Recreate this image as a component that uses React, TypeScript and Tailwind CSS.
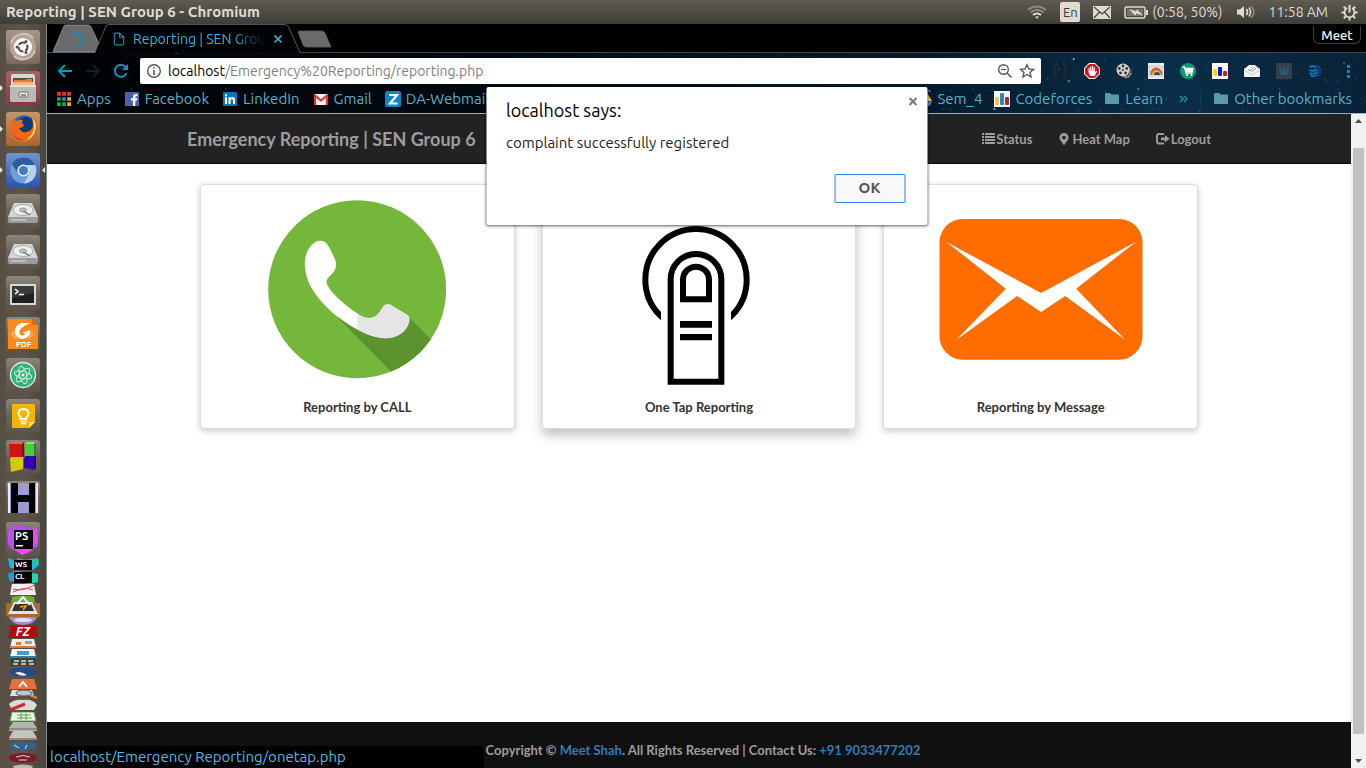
import React from "react";
import { FaMapMarkerAlt } from "react-icons/fa";
import { FiFile } from "react-icons/fi";

type Kids = { children?: React.ReactNode };

/* ---------- System panel ---------- */

function SystemPanel() {
  return (
    <header className="flex h-6 shrink-0 items-center justify-between bg-linear-to-b from-[#5f5b50] to-[#3e3d39] pr-2 pl-[6px] text-[14px] text-[#dfdbd2]">
      <h1 className="text-[15px] leading-6 font-bold">Reporting | SEN Group 6 - Chromium</h1>
      <div className="flex items-center gap-[13px] leading-6">
        <svg width="20" height="16" viewBox="0 0 20 16" fill="none" strokeWidth="2" aria-label="Wi-Fi">
          <path d="M1 6Q10 -1 19 6" stroke="#8d8a82" />
          <path d="M3.5 8.500Q10 3.500 16.500 8.500" stroke="#8d8a82" />
          <path d="M6 11Q10 8 14 11" stroke="#dfdbd2" />
          <path d="M8 12.500H12L10 15Z" fill="#dfdbd2" stroke="none" />
        </svg>
        <span className="flex h-5 w-5 items-center justify-center rounded-xs bg-[#dfdbd2] text-[13px] text-[#3c3b37]">En</span>
        <svg width="18" height="13" viewBox="0 0 18 13" aria-label="Messages">
          <rect width="18" height="13" fill="#dfdbd2" />
          <path d="M1 1L9 8L17 1M1 12L6.500 6M17 12L11.500 6" stroke="#4c4a44" strokeWidth="1.300" fill="none" />
        </svg>
        <span className="flex items-center gap-1">
          <svg width="24" height="13" viewBox="0 0 24 13" aria-label="Battery">
            <rect x="1" y="1" width="20" height="11" rx="1.500" fill="none" stroke="#dfdbd2" strokeWidth="1.500" />
            <rect x="22" y="4" width="2" height="5" fill="#dfdbd2" />
            <rect x="3" y="3" width="16" height="7" fill="#77746c" />
            <path d="M5 3L12 5.500L13 3.500L19 9.500L12.500 7.500L11 9.500Z" fill="#dfdbd2" />
          </svg>
          <span>(0:58, 50%)</span>
        </span>
        <svg width="20" height="16" viewBox="0 0 20 16" fill="none" strokeWidth="1.600" aria-label="Volume">
          <path d="M1 5.500H4L8 2V14L4 10.500H1Z" fill="#dfdbd2" />
          <path d="M10.500 5Q12.500 8 10.500 11M13 3.500Q16 8 13 12.500" stroke="#dfdbd2" />
          <path d="M15.500 2Q20 8 15.500 14" stroke="#8d8a82" />
        </svg>
        <span>11:58 AM</span>
        <svg width="17" height="17" viewBox="0 0 17 17" fill="none" stroke="#dfdbd2" aria-label="Session">
          <path d="M6 4A5 5 0 1 0 11 4" strokeWidth="1.800" />
          <path d="M8.500 1V8.500" strokeWidth="2" />
          <path d="M.5 8.500H3.500M13.500 8.500H16.500M2.800 2.800L4.800 4.800M14.200 2.800L12.200 4.800M2.800 14.200L4.800 12.200M14.200 14.200L12.200 12.200M8.500 13.500V16.500" strokeWidth="2" />
        </svg>
      </div>
    </header>
  );
}

/* ---------- Launcher ---------- */

function Svg34({ children }: Kids) {
  return (
    <svg width="34" height="34" viewBox="0 0 34 34">
      {children}
    </svg>
  );
}

function DriveIcon() {
  return (
    <Svg34>
      <path d="M8 9H26L32 23H2Z" fill="#d5d5d5" />
      <path d="M2 23H32V27Q32 29 30 29H4Q2 29 2 27Z" fill="#9b9b9b" />
      <ellipse cx="17" cy="16" rx="10" ry="5.500" fill="#eeeeee" stroke="#a9a9a9" />
      <ellipse cx="17" cy="16" rx="3.500" ry="2" fill="#c2c2c2" stroke="#999" />
      <path d="M24 21L17 17" stroke="#888" strokeWidth="1.500" />
      <path d="M5 26H20" stroke="#ddd" />
    </Svg34>
  );
}

type App = { name: string; tile: string; icon: React.ReactNode; running?: boolean; active?: boolean };

const plain = "bg-linear-to-b from-[#8b857b] via-[#696259] to-[#5b544b]";

const apps: App[] = [
  {
    name: "Search",
    tile: "bg-linear-to-b from-[#a8968a] to-[#7d685b]",
    icon: (
      <Svg34>
        <circle cx="17" cy="17" r="13" fill="#b3a498" />
        <path d="M5 13A13 13 0 0 1 27 8M29 21A13 13 0 0 1 8 26" stroke="#d0c5bc" strokeWidth="2" fill="none" />
        <circle cx="17" cy="17" r="9" fill="#fff" />
        <circle cx="17" cy="17" r="4.500" fill="none" stroke="#5e4c40" strokeWidth="2.200" strokeDasharray="7.600 1.800" strokeDashoffset="3" />
        <circle cx="11" cy="17" r="1.500" fill="#5e4c40" />
        <circle cx="20" cy="11.500" r="1.500" fill="#5e4c40" />
        <circle cx="20" cy="22.500" r="1.500" fill="#5e4c40" />
      </Svg34>
    ),
  },
  {
    name: "Files",
    tile: "bg-linear-to-b from-[#a8616b] to-[#87364a]",
    running: true,
    icon: (
      <Svg34>
        <rect x="5" y="3" width="24" height="15" rx="2" fill="#d7d7d2" />
        <rect x="7" y="7" width="20" height="8" fill="#594c41" />
        <path d="M8 9H19L20 8H26V15H8Z" fill="#ef7d31" />
        <rect x="7" y="11" width="20" height="4" fill="#f7b57f" />
        <rect x="4" y="14" width="26" height="17" rx="1.500" fill="#b9b9b5" />
        <path d="M4 15H30" stroke="#efefec" strokeWidth="1.500" />
        <rect x="13" y="21" width="9" height="5" rx="1" fill="#e9e9e5" stroke="#71716d" />
        <path d="M15 24H20" stroke="#71716d" strokeWidth="1.500" />
      </Svg34>
    ),
  },
  {
    name: "Firefox",
    tile: "bg-linear-to-b from-[#c4956b] to-[#a9652d]",
    running: true,
    icon: (
      <Svg34>
        <circle cx="18" cy="16" r="12.500" fill="#1f62b0" />
        <circle cx="20" cy="13" r="8" fill="#0c3a7c" />
        <path d="M25 4Q33 11 30 20Q27 30 16 30Q5 29 4 18Q3 10 8 6Q8 9 11 9Q14 7 17 8Q15 11 18 13Q17 16 13 16Q15 21 21 20Q27 18 27 12Q27 8 25 4Z" fill="#ea6b1d" />
        <path d="M26 6Q32 12 29 19Q27 26 20 28Q28 22 28 15Q28 10 26 6Z" fill="#ffe155" />
        <path d="M6 19Q9 27 18 28Q9 30 6 19Z" fill="#c6301c" />
      </Svg34>
    ),
  },
  {
    name: "Chromium",
    tile: "bg-linear-to-b from-[#7392cc] to-[#2f55ad]",
    running: true,
    active: true,
    icon: (
      <Svg34>
        <circle cx="17.500" cy="17.500" r="13" fill="#6f9fda" />
        <path d="M6 11A13 13 0 0 1 29 12H17Q11 12 11 19Z" fill="#2f5c9c" />
        <path d="M29 12A13 13 0 0 1 18 30.500L23.500 20Q24 15 21 12Z" fill="#b4d1f1" />
        <circle cx="17.500" cy="17.500" r="6" fill="#e6f0fb" />
        <circle cx="17.500" cy="17.500" r="4.600" fill="#3f7bc8" />
      </Svg34>
    ),
  },
  { name: "Disk 1", tile: plain, icon: <DriveIcon /> },
  { name: "Disk 2", tile: plain, icon: <DriveIcon /> },
  {
    name: "Terminal",
    tile: plain,
    icon: (
      <Svg34>
        <rect x="4" y="8" width="26" height="21" rx="1" fill="#d9d9d6" />
        <rect x="6" y="10" width="22" height="17" fill="#1f1f1f" />
        <path d="M6 10H28V17L6 22Z" fill="#3b3b3b" />
        <path d="M9 13L12 15.500L9 18M13 18.500H18" stroke="#fff" strokeWidth="1.500" fill="none" />
      </Svg34>
    ),
  },
  {
    name: "PDF Reader",
    tile: plain,
    icon: (
      <Svg34>
        <path d="M2 2H26V8H32V32H2Z" fill="#f58a1f" />
        <path d="M26 2L32 8H26Z" fill="#e06a00" />
        <path d="M4 17L11 10V24ZM22 24L28 17L24 13Z" fill="#f9a752" />
        <path d="M25 6H16Q8.500 8 9 15Q10 22 17 22Q25 21 24 13L17 15.500L19 17Q18 19 15.500 18.500Q12 16 14.500 12Q18 8.500 25 6Z" fill="#fff" />
        <text x="17.500" y="30" textAnchor="middle" fontSize="8" fontWeight="700" fill="#fff">PDF</text>
      </Svg34>
    ),
  },
  {
    name: "Atom",
    tile: plain,
    icon: (
      <Svg34>
        <circle cx="17" cy="17" r="12.500" fill="#35b07a" stroke="#dff0e6" strokeWidth="1.300" />
        <g fill="none" stroke="#c9f0dd" strokeWidth="1">
          <ellipse cx="17" cy="17" rx="9" ry="3.500" transform="rotate(15 17 17)" />
          <ellipse cx="17" cy="17" rx="9" ry="3.500" transform="rotate(75 17 17)" />
          <ellipse cx="17" cy="17" rx="9" ry="3.500" transform="rotate(135 17 17)" />
        </g>
        <circle cx="17" cy="17" r="1.500" fill="#fff" />
      </Svg34>
    ),
  },
  {
    name: "Keep",
    tile: plain,
    icon: (
      <Svg34>
        <path d="M7 5H28Q29 5 29 6V23L23 29H7Q6 29 6 28V6Q6 5 7 5Z" fill="#f5b400" />
        <path d="M29 23L23 29V23Z" fill="#ffe08c" />
        <path d="M14.500 20V18Q12 16 12.500 13.500Q13.500 10 17.500 10Q21.500 10 22.500 13.500Q23 16 20.500 18V20Z" fill="none" stroke="#fff" strokeWidth="1.800" />
        <path d="M14 22.500H21M15 24.500H20" stroke="#fff" strokeWidth="1.500" />
      </Svg34>
    ),
  },
  {
    name: "Code Blocks",
    tile: plain,
    icon: (
      <Svg34>
        <path d="M3 4L6 2H18V16L16 17H4Z" fill="#c9170f" />
        <path d="M19 4L21 2H30V14L28 16H19Z" fill="#4ccb3f" />
        <path d="M4 18L6 17H17V29L5 32Z" fill="#d8c80c" />
        <path d="M18 18L20 16H30V28L28 30L18 28Z" fill="#3500b8" />
        <path d="M3 4L6 2H18L16 4ZM19 4L21 2H30L28 4Z" fill="#fff" opacity=".35" />
        <path d="M16 4L18 2V16L16 17ZM28 4L30 2V14L28 16ZM28 18L30 16V28L28 30Z" fill="#000" opacity=".35" />
      </Svg34>
    ),
  },
  {
    name: "Haskell",
    tile: plain,
    icon: (
      <Svg34>
        <rect x="2" y="2" width="30" height="30" fill="#9d9bd0" />
        <rect x="2" y="2" width="2" height="30" fill="#e8e8f8" />
        <rect x="30" y="2" width="2" height="30" fill="#e8e8f8" />
        <path d="M5 2H12V14H23V2H29V32H23V21H12V32H5Z" fill="#000" />
      </Svg34>
    ),
  },
  {
    name: "PhpStorm",
    tile: plain,
    icon: (
      <Svg34>
        <path d="M2 9L8 3H17L25 7L31 6L32 24L22 31L16 33L12 30L4 26L2 22Z" fill="#b74af7" />
        <path d="M2 9L8 3L12 10L8 25L2 22Z" fill="#c04df0" />
        <path d="M6 26L12 30L16 33L26 28V25Z" fill="#ff45ed" />
        <path d="M26 7L31 6L32 20L26 24Z" fill="#e04df0" />
        <rect x="8" y="8" width="19" height="19" fill="#000" />
        <text x="9" y="18" fontSize="11" fontWeight="700" fill="#fff">PS</text>
        <rect x="10" y="23" width="7" height="1.500" fill="#fff" />
      </Svg34>
    ),
  },
];

function Folded({ h, children }: Kids & { h: number }) {
  return (
    <svg className="block shrink-0" width="36" height={h} viewBox={`0 0 36 ${h}`}>
      {children}
    </svg>
  );
}

function FoldedApps() {
  return (
    <div className="mt-px flex flex-col items-center" aria-label="More applications">
      <Folded h={14}>
        <path d="M3 1L12 4L33 1L34 8L28 13L5 11Z" fill="#1bb9dc" />
        <path d="M12 1L25 4L33 1L34 6H12Z" fill="#16d08a" />
        <rect x="9" y="3" width="18" height="10" fill="#000" />
        <text x="10" y="10" fontSize="8" fontWeight="700" fill="#fff">WS</text>
      </Folded>
      <Folded h={13}>
        <path d="M3 3L12 0L33 3L33 11L25 13L5 10Z" fill="#20d7a7" />
        <path d="M3 3L10 0V12L4 8Z" fill="#1c9fe0" />
        <rect x="9" y="1" width="18" height="11" fill="#000" />
        <text x="10" y="8" fontSize="8" fontWeight="700" fill="#fff">CL</text>
      </Folded>
      <Folded h={12}>
        <path d="M7 0H29L31 11H5Z" fill="#f1efef" />
        <path d="M8 5Q18 8 29 1M8 8Q20 2 28 6" stroke="#d9434b" fill="none" />
      </Folded>
      <Folded h={21}>
        <path d="M7 1Q18 -2 29 1L30 8H6Z" fill="#6faa3a" />
        <path d="M1 7H35V19Q35 21 33 21H3Q1 21 1 19Z" fill="#a36a38" />
        <path d="M9 6H27L33 18H3Z" fill="#e7e4df" />
        <path d="M10 8H26L29 15H7Z" fill="#333" />
        <path d="M12 8L18 1L25 9" stroke="#f1f1ee" strokeWidth="2" fill="none" />
        <path d="M15 11L21 10L18 14" stroke="#ff8f2e" strokeWidth="1.500" fill="none" />
      </Folded>
      <Folded h={8}>
        <path d="M4 0H32Q30 7 18 8Q6 7 4 0Z" fill="#a68bd0" />
        <ellipse cx="18" cy="3" rx="9" ry="2" fill="#e6dcf5" />
      </Folded>
      <Folded h={14}>
        <path d="M6 0H31L33 13H3Z" fill="#b30b0e" />
        <text x="18" y="11" textAnchor="middle" fontSize="12" fontWeight="700" fontStyle="italic" fill="#fff">FZ</text>
      </Folded>
      <Folded h={10}>
        <path d="M7 0H29L31 9H5Z" fill="#f4ede7" />
        <path d="M5 8H31" stroke="#d8784a" strokeWidth="2" />
        <rect x="11" y="3" width="5" height="3" fill="#d8784a" />
        <rect x="20" y="2" width="7" height="3" fill="#a99" />
      </Folded>
      <Folded h={9}>
        <path d="M7 0H29L31 8H5Z" fill="#eef4f7" />
        <path d="M5 8H31" stroke="#2d80b3" strokeWidth="2" />
        <rect x="12" y="2" width="12" height="4" fill="#4a9bc6" />
      </Folded>
      <Folded h={9}>
        <path d="M6 0H30L31 8H5Z" fill="#39433b" />
        <path d="M9 3H14M16 3H21M23 3H28M8 6H13M16 6H21M24 6H29" stroke="#dfe4d8" strokeWidth="1.500" />
      </Folded>
      <Folded h={11}>
        <path d="M4 5Q8 0 18 1Q31 0 32 6Q26 11 15 9Q10 11 4 5Z" fill="#204f87" />
        <path d="M10 6Q15 3 22 8Q16 10 10 6Z" fill="#eee" />
      </Folded>
      <Folded h={12}>
        <path d="M7 1H29L32 11H4Z" fill="#e8703a" />
        <path d="M14 9L18 4L22 9" stroke="#fff" strokeWidth="2" fill="none" />
      </Folded>
      <Folded h={9}>
        <path d="M7 0H27L29 6H5Z" fill="#dfe1dd" />
        <ellipse cx="19" cy="3" rx="8" ry="3" fill="#b7c5cd" stroke="#515151" />
        <path d="M25 5L32 8" stroke="#d88b28" strokeWidth="2" />
      </Folded>
      <Folded h={13}>
        <path d="M4 5Q9 0 18 1Q28 0 32 6L29 11H7Z" fill="#dcdad7" />
        <path d="M5 11L20 5" stroke="#cc2b2b" strokeWidth="3" />
      </Folded>
      <Folded h={10}>
        <path d="M7 0H29L31 9H5Z" fill="#f1f6ec" stroke="#59a44b" />
        <path d="M12 3H26M12 6H27M16 1V8M21 1V8" stroke="#59a44b" />
      </Folded>
      <Folded h={9}>
        <path d="M8 0H28L32 6V9H4V6Z" fill="#b4b2af" />
        <path d="M4 7H32" stroke="#8c8b88" strokeWidth="2" />
      </Folded>
      <Folded h={10}>
        <path d="M8 0H28L32 7V9H4V7Z" fill="#c5c3c0" />
        <path d="M4 8H32" stroke="#8c8b88" strokeWidth="2" />
      </Folded>
      <Folded h={11}>
        <path d="M4 4Q10 -1 17 2Q26 -1 32 4L30 8H23L21 11H15L14 8H7Z" fill="#35638f" />
        <path d="M9 4L14 7M22 4L20 8" stroke="#d4e1ed" />
      </Folded>
      <Folded h={12}>
        <ellipse cx="18" cy="6" rx="14" ry="5" fill="#7e1a26" />
        <path d="M11 5Q18 2 25 5M14 8H22" stroke="#ded2d2" fill="none" />
      </Folded>
      <Folded h={9}>
        <path d="M8 2Q18 -1 28 2L25 9H11Z" fill="#bdb9b3" />
      </Folded>
    </div>
  );
}

function Launcher() {
  return (
    <nav
      aria-label="Launcher"
      className="flex w-[47px] shrink-0 flex-col overflow-hidden border-r border-[#7b8f8f] bg-linear-to-r from-[#564e43] via-[#5d554a] to-[#4c453b] pt-[6px]"
    >
      <div className="flex shrink-0 flex-col gap-[7px]">
        {apps.map((app) => (
          <div key={app.name} className="flex items-center justify-between">
            <svg width="6" height="8" viewBox="0 0 6 8">
              {app.running && <path d="M0 1L3 4L0 7Z" fill="#e6e2dc" />}
            </svg>
            <button aria-label={app.name} className={`h-[34px] w-[34px] rounded-[3px] ${app.tile}`}>
              {app.icon}
            </button>
            <svg width="6" height="8" viewBox="0 0 6 8">
              {app.active && <path d="M5 1L2 4L5 7Z" fill="#e6e2dc" />}
            </svg>
          </div>
        ))}
      </div>
      <FoldedApps />
    </nav>
  );
}

/* ---------- Browser chrome ---------- */

function TabStrip() {
  return (
    <div className="flex h-[29px] shrink-0 items-start justify-between border-b border-[#444] bg-black">
      <div className="flex h-[29px]">
        <div className="relative ml-[6px] flex h-[29px] w-[50px] items-center justify-center">
          <svg className="absolute inset-0" width="50" height="29" viewBox="0 0 50 29">
            <path d="M0 28L11 2Q12 1 13 1H35Q37 1 38 3L46 20L42 28Z" fill="#6b6b6b" stroke="#8a8a8a" />
          </svg>
          <FiFile className="relative text-[#1a8db5]" size={14} />
        </div>
        <div className="relative -ml-2 flex h-[29px] w-[206px] items-center pr-[19px] pl-[17px]">
          <svg className="absolute inset-0" width="206" height="29" viewBox="0 0 206 29">
            <path d="M0 28.500L11 2Q12 .5 14 .5H190Q192 .5 193 2L205 28.500" fill="#000204" stroke="#555" />
            <path d="M1 29H205" stroke="#000204" strokeWidth="1.500" />
          </svg>
          <FiFile className="relative shrink-0 text-[#1a8db5]" size={14} />
          <span className="relative ml-[7px] flex-1 overflow-hidden text-[14px] leading-5 whitespace-nowrap text-[#2db7ea] [mask-image:linear-gradient(to_right,#000_75%,transparent)]">
            Reporting | SEN Group 6
          </span>
          <button aria-label="Close tab" className="relative ml-2">
            <svg width="8" height="8" viewBox="0 0 8 8">
              <path d="M.5 .5L7.500 7.500M7.500 .5L.5 7.500" stroke="#46a5bd" strokeWidth="1.600" />
            </svg>
          </button>
        </div>
        <button aria-label="New tab" className="-ml-[4px] flex items-center">
          <svg width="36" height="18" viewBox="0 0 36 18">
            <path d="M2 1H25Q27 1 28 3L34 17H9Q7 17 6 15L1 2Z" fill="#6b6b6b" stroke="#555" />
          </svg>
        </button>
      </div>
      <button className="mt-[2px] mr-[5px] h-[18px] w-[48px] rounded-b-md border border-t-0 border-[#3d3d3d] text-[13px] leading-4 font-medium text-white">
        Meet
      </button>
    </div>
  );
}

const starField = Array.from({ length: 170 }, (_, i) => ({
  x: 1319 - ((i * i * 7.3 + i * 61) % 1319) * (i % 3 === 0 ? 1 : 0.42),
  y: (i * 37 + i * i * 3) % 60,
  r: i % 13 === 0 ? 1.2 : 0.6,
  o: 0.15 + (i % 5) * 0.12,
}));

function NightSky() {
  return (
    <svg className="absolute inset-0 h-full w-full" viewBox="0 0 1319 60" preserveAspectRatio="xMaxYMid slice">
      <defs>
        <linearGradient id="sky" x1="0" x2="1" y1="0" y2="0">
          <stop offset="0" stopColor="#000305" />
          <stop offset=".35" stopColor="#010a12" />
          <stop offset=".65" stopColor="#04192a" />
          <stop offset=".85" stopColor="#0a2d47" />
          <stop offset="1" stopColor="#092238" />
        </linearGradient>
      </defs>
      <rect width="1319" height="60" fill="url(#sky)" />
      {starField.map((s, i) => (
        <circle key={i} cx={s.x} cy={s.y} r={s.r} fill="#9fd6ef" opacity={s.o} />
      ))}
    </svg>
  );
}

function Icon16({ children }: Kids) {
  return (
    <svg width="16" height="16" viewBox="0 0 16 16">
      {children}
    </svg>
  );
}

const extensions: { name: string; icon: React.ReactNode }[] = [
  {
    name: "JSON viewer",
    icon: <path d="M5.500 1Q3 1 3 4Q3 7.500 1.500 8Q3 8.500 3 12Q3 15 5.500 15M10.500 1Q13 1 13 4Q13 7.500 14.500 8Q13 8.500 13 12Q13 15 10.500 15" stroke="#2a2a2a" strokeWidth="1.800" fill="none" />,
  },
  {
    name: "Ad blocker",
    icon: (
      <>
        <path d="M5 0H11L16 5V11L11 16H5L0 11V5Z" fill="#fff" />
        <path d="M5.300 1H10.700L15 5.300V10.700L10.700 15H5.300L1 10.700V5.300Z" fill="#d9121a" />
        <path d="M4.500 9V5H5.600V8H6.200V3.500H7.400V7.500H8V3H9.200V7.500H9.800V4.500H11V9.500L12 8L13 8.500L10.500 13H6.500Q4.500 11.500 4.500 9Z" fill="#fff" />
      </>
    ),
  },
  {
    name: "Film reel",
    icon: (
      <>
        <ellipse cx="10" cy="9" rx="5.500" ry="6.500" fill="#5a5a5a" />
        <ellipse cx="7" cy="7" rx="6.500" ry="6.500" fill="#d4d4d4" />
        <g fill="#333">
          <circle cx="7" cy="3" r="1.400" />
          <circle cx="3.300" cy="5.500" r="1.400" />
          <circle cx="10.700" cy="5.500" r="1.400" />
          <circle cx="4.500" cy="10" r="1.400" />
          <circle cx="9.500" cy="10" r="1.400" />
          <circle cx="7" cy="7" r="1" />
        </g>
        <path d="M9 14Q14 15 15 10" stroke="#ccc" fill="none" strokeDasharray="2 1" />
      </>
    ),
  },
  {
    name: "Rainbow",
    icon: (
      <>
        <rect width="16" height="16" fill="#eceeee" />
        <rect x="1.500" y="3" width="13" height="10" fill="#dce9f5" stroke="#aab" strokeWidth=".6" />
        <path d="M2.500 12V9A5.500 5.500 0 0 1 14 12Z" fill="#d9622a" />
        <path d="M4 12A4 4 0 0 1 13 12Z" fill="#f4b92c" />
        <path d="M6 12A2.500 2.500 0 0 1 12 12Z" fill="#1f4f98" />
      </>
    ),
  },
  {
    name: "Shopping",
    icon: (
      <>
        <circle cx="8" cy="8" r="8" fill="#0d9a6c" />
        <path d="M2.500 4H4.500L6 10H12L13 5.500H5" stroke="#fff" strokeWidth="1.300" fill="none" />
        <path d="M5 5.500H13L12 9H6Z" fill="#fff" />
        <circle cx="7" cy="12" r="1" fill="#fff" />
        <circle cx="11.500" cy="12" r="1" fill="#fff" />
      </>
    ),
  },
  {
    name: "Codeforces tools",
    icon: (
      <>
        <rect width="16" height="16" fill="#fff" />
        <rect x="1" y="6" width="4" height="7" rx="1" fill="#fbdc00" />
        <rect x="6" y="4" width="4" height="9" rx="1" fill="#1212e8" />
        <rect x="11" y="8" width="4" height="5" rx="1" fill="#e01717" />
      </>
    ),
  },
  {
    name: "Mail tracker",
    icon: (
      <>
        <path d="M0 6L5 2H11L16 6V13Q16 14 15 14H1Q0 14 0 13Z" fill="#f3f3f3" />
        <path d="M0 7L8 12L16 7" stroke="#cfcfcf" fill="none" />
        <path d="M4 6L6 8L10 4M7.500 7.500L8.500 8.500L12.500 4.500" stroke="#999" fill="none" />
      </>
    ),
  },
  {
    name: "Udacity",
    icon: (
      <>
        <rect width="16" height="16" fill="#333d4c" />
        <path d="M4 4V8Q4 11.500 7 11.500Q9 11 9 8V4M7 5.500V9Q7.500 11.500 10 11Q12 10.500 12 8V4" stroke="#2a7296" strokeWidth="1" fill="none" />
      </>
    ),
  },
  {
    name: "Database",
    icon: (
      <>
        <path d="M6 2H11Q14 5 13 11Q11 14 8 13Z" fill="#0b3f70" />
        <path d="M1.500 4Q5 2 8 4.500M1.500 7Q5 9 8.500 6.500M1.500 10Q5 12 9 9M2.500 12.500Q6 14 8.500 12" stroke="#0d7ad0" strokeWidth="1.600" fill="none" />
      </>
    ),
  },
  {
    name: "Browser menu",
    icon: (
      <g fill="#1287b4">
        <rect x="7" y="2" width="3" height="3" />
        <rect x="7" y="7" width="3" height="3" />
        <rect x="7" y="12" width="3" height="3" />
      </g>
    ),
  },
];

function Toolbar() {
  return (
    <div className="relative flex h-8 items-center pt-1 pr-[10px] pl-[10px]">
      <div className="flex w-[83px] gap-3">
        <button aria-label="Back">
          <Icon16>
            <path d="M15 8H2M8 2L2 8L8 14" stroke="#0f94c4" strokeWidth="2" fill="none" />
          </Icon16>
        </button>
        <button aria-label="Forward">
          <Icon16>
            <path d="M1 8H14M8 2L14 8L8 14" stroke="#06222d" strokeWidth="2" fill="none" />
          </Icon16>
        </button>
        <button aria-label="Reload">
          <Icon16>
            <path d="M13.500 10A6 6 0 1 1 12.500 4" stroke="#0f94c4" strokeWidth="2" fill="none" />
            <path d="M15 1V7H9Z" fill="#0f94c4" />
          </Icon16>
        </button>
      </div>
      <div className="flex h-[26px] flex-1 items-center rounded-xs bg-white px-[6px] text-[14px]">
        <svg width="16" height="16" viewBox="0 0 16 16" fill="none" stroke="#555">
          <circle cx="8" cy="8" r="6.300" strokeWidth="1.400" />
          <path d="M8 7V12M8 4V5.600" strokeWidth="1.600" />
        </svg>
        <label htmlFor="address" className="ml-[6px] text-black">localhost</label>
        <input
          id="address"
          defaultValue="/Emergency%20Reporting/reporting.php"
          className="min-w-0 flex-1 bg-transparent text-[#808080] outline-none"
        />
        <div className="flex gap-[6px]">
          <svg width="16" height="16" viewBox="0 0 16 16" fill="none" stroke="#5a5a5a" aria-label="Zoomed out">
            <circle cx="6.500" cy="6.500" r="4.800" strokeWidth="1.400" />
            <path d="M10 10L14.500 14.500" strokeWidth="1.600" />
            <path d="M4 6.500H9" strokeWidth="1.300" />
          </svg>
          <button aria-label="Bookmark this page">
            <Icon16>
              <path d="M8 1.800L9.900 6L14.500 6.400L11 9.400L12.100 14L8 11.500L3.900 14L5 9.400L1.500 6.400L6.100 6Z" fill="none" stroke="#5a5a5a" strokeWidth="1.400" />
            </Icon16>
          </button>
        </div>
      </div>
      <div className="ml-[11px] flex gap-4">
        {extensions.map((e) => (
          <button key={e.name} aria-label={e.name}>
            <Icon16>{e.icon}</Icon16>
          </button>
        ))}
      </div>
    </div>
  );
}

function Bookmark({ icon, label }: { icon: React.ReactNode; label: string }) {
  return (
    <a href="#" className="flex shrink-0 items-center gap-[5px] whitespace-nowrap">
      <Icon16>{icon}</Icon16>
      {label}
    </a>
  );
}

const folderIcon = <path d="M1 3Q1 2 2 2H6L7.500 3.500H14Q15 3.500 15 4.500V12Q15 13 14 13H2Q1 13 1 12Z" fill="#5a9aaa" />;

const appsIcon = (
  <>
    <path d="M1 1h4v4h-4zM6 1h4v4h-4zM11 1h4v4h-4z" fill="#e8362c" />
    <path d="M1 6h4v4h-4z" fill="#28a352" />
    <path d="M6 6h4v4h-4z" fill="#3382f0" />
    <path d="M11 6h4v4h-4z" fill="#f2b21a" />
    <path d="M1 11h4v4h-4zM6 11h4v4h-4z" fill="#28a352" />
    <path d="M11 11h4v4h-4z" fill="#f2b21a" />
    <path d="M5.500 0V16M10.500 0V16M0 5.500H16M0 10.500H16" stroke="#000508" strokeWidth="1.400" />
  </>
);

function BookmarksBar() {
  return (
    <div className="relative flex h-7 items-center justify-between pr-[14px] pl-[9px] text-[15px] text-[#5ab0c6]">
      <div className="flex gap-[13px]">
        <Bookmark label="Apps" icon={appsIcon} />
        <Bookmark
          label="Facebook"
          icon={
            <>
              <rect x="1" y="1" width="14" height="14" fill="#4a63a6" />
              <path d="M9 15V9.500H7V7.300H9V6Q9 3 12 3H13.500V5.200H12.300Q11.300 5.200 11.300 6.300V7.300H13.500L13 9.500H11.300V15Z" fill="#fff" />
            </>
          }
        />
        <Bookmark
          label="LinkedIn"
          icon={
            <>
              <rect x="1" y="1" width="14" height="14" rx="1" fill="#0b76b5" />
              <path d="M3 6.300H5V13H3ZM3 3.200H5V5.200H3ZM6.500 6.300H8.500V7.200Q9.300 6.100 10.700 6.100Q13 6.200 13 9V13H11V9.500Q11 8 9.900 8Q8.500 8 8.500 9.700V13H6.500Z" fill="#fff" />
            </>
          }
        />
        <Bookmark
          label="Gmail"
          icon={
            <>
              <rect x="1" y="3" width="14" height="11" fill="#f2f2f2" />
              <path d="M2 14V4.500L8 9.500L14 4.500V14" fill="none" stroke="#d93a2f" strokeWidth="2.200" />
            </>
          }
        />
        <Bookmark
          label="DA-Webmail"
          icon={
            <>
              <rect width="16" height="16" rx="2" fill="#0a87c8" />
              <path d="M4 4H12L5 12.500H12.500" fill="none" stroke="#fff" strokeWidth="2.200" />
            </>
          }
        />
      </div>
      <div className="flex items-center gap-3">
        <Bookmark
          label="Sem_4"
          icon={
            <>
              <path d="M5.500 1H10.500L16 10H11Z" fill="#fbc93d" />
              <path d="M5.500 1L0 10L2.500 14.500L8 5.500Z" fill="#20a463" />
              <path d="M5 10.500H16L13.500 15H2.500Z" fill="#3d7ff0" />
            </>
          }
        />
        <Bookmark
          label="Codeforces"
          icon={
            <>
              <rect width="16" height="16" fill="#fff" />
              <rect x="1" y="6" width="4" height="8" rx="1" fill="#f5c542" />
              <rect x="6" y="2" width="4" height="12" rx="1" fill="#2287cc" />
              <rect x="11" y="6" width="4" height="8" rx="1" fill="#b4272d" />
            </>
          }
        />
        <Bookmark label="Learn" icon={folderIcon} />
        <button aria-label="More bookmarks" className="ml-1">
          <svg width="9" height="8" viewBox="0 0 9 8">
            <path d="M1 1L4 4L1 7M5 1L8 4L5 7" stroke="#1a8db5" strokeWidth="1.500" fill="none" />
          </svg>
        </button>
        <span className="h-4 w-px bg-[#0f4055]" />
        <Bookmark label="Other bookmarks" icon={folderIcon} />
      </div>
    </div>
  );
}

/* ---------- Page ---------- */

function ListGlyph() {
  return (
    <svg width="13" height="12" viewBox="0 0 13 12" fill="currentColor">
      <path d="M0 0H2V2H0ZM3 0H13V2H3ZM0 3H2V5H0ZM3 3H13V5H3ZM0 6H2V8H0ZM3 6H13V8H3ZM0 9H2V11H0ZM3 9H13V11H3Z" />
    </svg>
  );
}

function LogoutGlyph() {
  return (
    <svg width="14" height="12" viewBox="0 0 14 12">
      <path d="M8 1H3Q1 1 1 3V8.500Q1 10.500 3 10.500H8" fill="none" stroke="currentColor" strokeWidth="1.900" />
      <path d="M5 4.500H9V2L13.500 5.800L9 9.500V7.200H5Z" fill="currentColor" />
    </svg>
  );
}

function CallArt() {
  return (
    <svg width="204" height="188" viewBox="196.500 66 612 564">
      <clipPath id="disc">
        <circle cx="503" cy="343" r="267" />
      </clipPath>
      <circle cx="503" cy="343" r="267" fill="#75b73b" />
      <path d="M440 423L640 625L800 570L656 424L580 460Z" fill="#5d932e" clipPath="url(#disc)" />
      <path
        d="M392 197C408 198 414 207 421 220L437 254C442 266 441 280 432 291C424 303 411 307 411 322C414 343 455 383 503 415C522 432 549 433 562 421C572 412 577 401 582 394C588 387 596 386 604 390L650 418C659 423 661 430 659 440C653 467 625 490 587 490C540 488 490 460 442 424C390 380 346 330 346 265C346 225 372 196 392 197Z"
        fill="#fff"
      />
      <path
        d="M503 415C522 432 549 433 562 421C572 412 577 401 582 394C588 387 596 386 604 390L650 418C659 423 661 430 659 440C653 467 625 490 587 490C556 489 528 476 503 463Z"
        fill="#e5e5e5"
      />
    </svg>
  );
}

function TapArt() {
  return (
    <svg width="204" height="188" viewBox="201 66 612 564">
      <clipPath id="ring">
        <path d="M330 150H665V330H665V460H603V330H393V460H330Z" />
      </clipPath>
      <circle cx="498" cy="314" r="152" fill="none" stroke="#000" strokeWidth="18" clipPath="url(#ring)" />
      <path d="M422 620V313A76 76 0 0 1 574 313V620Z" fill="none" stroke="#000" strokeWidth="18" />
      <path d="M459 373V314A39 39 0 0 1 537 314V373Z" fill="none" stroke="#000" strokeWidth="18" />
      <path d="M450 438H546V458H450ZM450 477H546V496H450Z" fill="#000" />
    </svg>
  );
}

function MessageArt() {
  return (
    <svg width="204" height="188" viewBox="205.500 261 612 564">
      <rect x="207" y="327" width="609" height="422" rx="70" fill="#ff6c00" />
      <path d="M228 396L512 549L797 395L617 536L765 690L584 558L512 606L440 558L257 690L406 536Z" fill="#fff" />
    </svg>
  );
}

function Card({ title, shadow, children }: Kids & { title: string; shadow: string }) {
  return (
    <a
      href="#"
      className={`flex h-[245px] flex-1 flex-col items-center rounded-sm border border-[#ddd] bg-white pt-3 text-[13px] leading-[18px] font-bold text-[#333] ${shadow}`}
    >
      {children}
      <span className="mt-[13px]">{title}</span>
    </a>
  );
}

function Page() {
  return (
    <div className="flex min-w-0 flex-1 flex-col bg-white font-['Lato',sans-serif]">
      <nav className="h-[50px] shrink-0 border-b border-[#080808] bg-[#222] text-[#9d9d9d]">
        <div className="mx-auto flex h-full max-w-[1024px] items-center justify-between">
          <a href="#" className="text-[18px] leading-6 font-bold">Emergency Reporting | SEN Group 6</a>
          <div className="flex gap-[26px] text-[13px] leading-[18px] font-bold">
            <a href="#" className="flex items-center gap-px"><ListGlyph />Status</a>
            <a href="#" className="flex items-center gap-[2px]"><FaMapMarkerAlt size={12} />Heat Map</a>
            <a href="#" className="flex items-center gap-px"><LogoutGlyph />Logout</a>
          </div>
        </div>
      </nav>
      <main className="mx-auto flex w-full max-w-[1024px] flex-1 items-start gap-[27px] px-[13px] pt-5">
        <Card title="Reporting by CALL" shadow="shadow-[0_2px_6px_rgba(0,0,0,0.22)]"><CallArt /></Card>
        <Card title="One Tap Reporting" shadow="shadow-[0_6px_12px_rgba(0,0,0,0.25)]"><TapArt /></Card>
        <Card title="Reporting by Message" shadow="shadow-[0_2px_6px_rgba(0,0,0,0.22)]"><MessageArt /></Card>
      </main>
      <footer className="flex h-[46px] shrink-0 justify-center bg-[#101010] pt-[19px] pl-2 text-[13px] leading-[18px] font-bold text-[#9d9d9d]">
        <p>
          Copyright © <a href="#" className="text-[#337ab7]">Meet Shah</a>. All Rights Reserved | Contact Us:{" "}
          <a href="#" className="text-[#337ab7]">+91 9033477202</a>
        </p>
      </footer>
    </div>
  );
}

function Scrollbar() {
  return (
    <div className="flex w-[15px] shrink-0 flex-col items-center justify-between bg-[#f1f1f1] py-[5px]" aria-hidden="true">
      <svg width="7" height="5" viewBox="0 0 7 5"><path d="M0 4L3.500 0L7 4Z" fill="#505050" /></svg>
      <div className="my-6 w-[11px] flex-1 bg-[#c1c1c1]" />
      <svg width="7" height="5" viewBox="0 0 7 5"><path d="M0 1L3.500 5L7 1Z" fill="#505050" /></svg>
    </div>
  );
}

function AlertDialog() {
  return (
    <div
      role="alertdialog"
      aria-labelledby="alert-title"
      aria-describedby="alert-text"
      className="absolute top-[63px] left-1/2 flex w-[441px] -translate-x-1/2 flex-col rounded-xs bg-white px-5 pt-[11px] pb-[22px] text-[#222] shadow-[0_1px_3px_rgba(0,0,0,0.65)]"
    >
      <button aria-label="Close" className="absolute top-[10px] right-[10px]">
        <svg width="9" height="9" viewBox="0 0 9 9">
          <path d="M1 1L8 8M8 1L1 8" stroke="#777" strokeWidth="2" />
        </svg>
      </button>
      <h2 id="alert-title" className="text-[18px] leading-6 text-black">localhost says:</h2>
      <p id="alert-text" className="mt-[11px] text-[15px] leading-5">complaint successfully registered</p>
      <button className="mt-[21px] mr-[2px] h-[29px] w-[71px] self-end rounded-[1px] border border-[#3b7de9] bg-[#f8f8f8] text-[15px] font-bold text-[#555]">
        OK
      </button>
    </div>
  );
}

export default function App() {
  return (
    <div className="flex h-screen flex-col overflow-hidden bg-black font-['Ubuntu','Noto_Sans',sans-serif]">
      <SystemPanel />
      <div className="flex min-h-0 flex-1">
        <Launcher />
        <div className="relative flex min-w-0 flex-1 flex-col">
          <TabStrip />
          <div className="relative shrink-0 border-b border-[#a9adb3]">
            <NightSky />
            <Toolbar />
            <BookmarksBar />
          </div>
          <div className="flex min-h-0 flex-1">
            <Page />
            <Scrollbar />
          </div>
          <div className="absolute bottom-0 left-0 h-[22px] w-[437px] rounded-tr-sm bg-black pl-[3px] text-[15px] leading-[22px] text-[#5bb8e0]">
            localhost/Emergency Reporting/onetap.php
          </div>
          <AlertDialog />
        </div>
      </div>
    </div>
  );
}
